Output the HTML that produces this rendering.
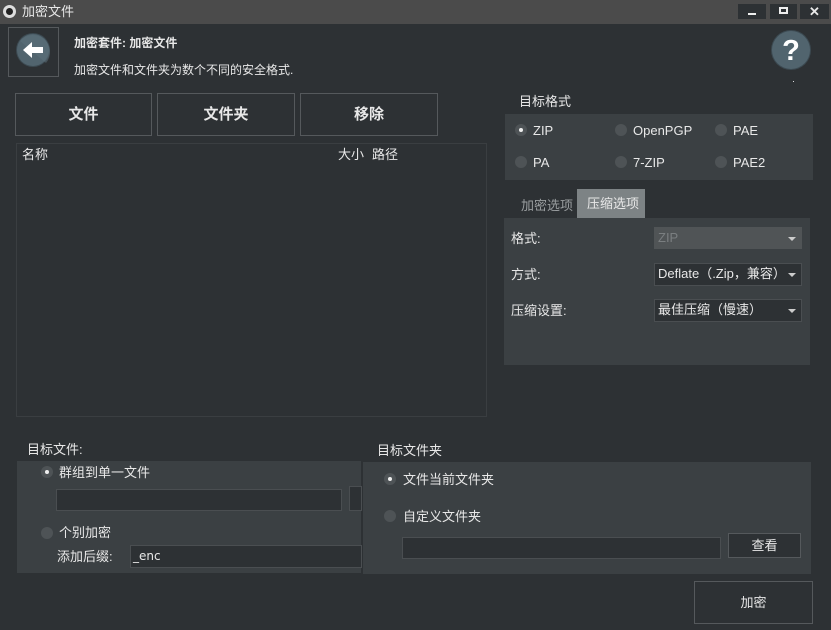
<!DOCTYPE html>
<html><head><meta charset="utf-8"><style>
*{margin:0;padding:0;box-sizing:border-box}
body{width:831px;height:630px;background:#2d3134;font-family:"Liberation Sans","Noto Sans CJK SC",sans-serif;font-size:13px;line-height:15px;color:#e8e8e8;position:relative;overflow:hidden}
.a{position:absolute}
.btn{position:absolute;border:1px solid #55595c;background:#2d3134;display:flex;align-items:center;justify-content:center}
.panel{position:absolute;background:#3b4043}
.r{position:absolute;width:12px;height:12px;border-radius:50%;background:#4e5356}
.r.on::after{content:"";position:absolute;left:4px;top:4px;width:4px;height:4px;border-radius:50%;background:#eee}
.inp{position:absolute;background:#2d3134;border:1px solid #4a4e51}
.combo{position:absolute;background:#2d3134;border:1px solid #4a4e51;padding-left:3px;line-height:19px}
.combo::after{content:"";position:absolute;right:5px;top:9px;border:4px solid transparent;border-top:4px solid #ccc}
</style></head><body>
<div class="a" style="left:0;top:0;width:831px;height:24px;background:#4b4b4b"></div>
<div class="a" style="left:3px;top:5px;width:13px;height:13px;border-radius:50%;background:#ddd"></div>
<div class="a" style="left:6px;top:8px;width:7px;height:7px;border-radius:50%;background:#222"></div>
<div class="a" style="left:22px;top:4px;font-size:13px">加密文件</div>
<div class="a" style="left:738px;top:4px;width:28px;height:15px;background:#2d3134"><div class="a" style="left:10px;top:9px;width:8px;height:2px;background:#eee"></div></div>
<div class="a" style="left:770px;top:4px;width:27px;height:15px;background:#2d3134"><div class="a" style="left:9px;top:3px;width:9px;height:7px;border:2px solid #eee"></div></div>
<div class="a" style="left:800px;top:4px;width:29px;height:15px;background:#2d3134;font-weight:bold;font-size:13px;text-align:center;line-height:15px">✕</div>

<div class="a" style="left:8px;top:27px;width:51px;height:50px;border:1px solid #55595c"></div>
<svg class="a" style="left:16px;top:33px" width="36" height="36"><circle cx="17" cy="17" r="17" fill="#3c4a52"/><circle cx="17" cy="17" r="16" fill="#51646e"/><path d="M4 8 L30 30 A17 17 0 0 0 4 8Z" fill="#5d717b" opacity=".5"/><path d="M7 17 L16 9 V14 H27 V20 H16 V25Z" fill="#fff"/></svg>
<div class="a" style="left:74px;top:36px;font-weight:bold;font-size:12px">加密套件: 加密文件</div>
<div class="a" style="left:74px;top:63px;font-size:12px">加密文件和文件夹为数个不同的安全格式.</div>
<svg class="a" style="left:771px;top:30px" width="41" height="41"><circle cx="20" cy="20" r="20" fill="#3c4a52"/><circle cx="20" cy="20" r="19" fill="#51646e"/><text x="20" y="30" text-anchor="middle" font-family="Liberation Sans" font-weight="bold" font-size="29" fill="#fff">?</text></svg>
<div class="a" style="left:793px;top:81px;width:1px;height:1px;background:#ddd"></div>

<div class="btn" style="left:15px;top:93px;width:137px;height:43px;font-weight:bold;font-size:15px">文件</div>
<div class="btn" style="left:157px;top:93px;width:138px;height:43px;font-weight:bold;font-size:15px">文件夹</div>
<div class="btn" style="left:300px;top:93px;width:138px;height:43px;font-weight:bold;font-size:15px">移除</div>
<div class="a" style="left:16px;top:143px;width:471px;height:274px;border:1px solid #3a3e41"></div>
<div class="a" style="left:22px;top:147px">名称</div>
<div class="a" style="left:338px;top:147px">大小</div>
<div class="a" style="left:372px;top:147px">路径</div>

<div class="a" style="left:519px;top:94px">目标格式</div>
<div class="panel" style="left:505px;top:114px;width:308px;height:66px"></div>
<div class="r on" style="left:515px;top:124px"></div><div class="a" style="left:533px;top:123px">ZIP</div>
<div class="r" style="left:615px;top:124px"></div><div class="a" style="left:633px;top:123px">OpenPGP</div>
<div class="r" style="left:715px;top:124px"></div><div class="a" style="left:733px;top:123px">PAE</div>
<div class="r" style="left:515px;top:156px"></div><div class="a" style="left:533px;top:155px">PA</div>
<div class="r" style="left:615px;top:156px"></div><div class="a" style="left:633px;top:155px">7-ZIP</div>
<div class="r" style="left:715px;top:156px"></div><div class="a" style="left:733px;top:155px">PAE2</div>

<div class="a" style="left:521px;top:198px;color:#9a9ea0">加密选项</div>
<div class="a" style="left:577px;top:189px;width:68px;height:30px;background:#7d8385"></div>
<div class="a" style="left:587px;top:196px">压缩选项</div>
<div class="panel" style="left:504px;top:218px;width:306px;height:147px"></div>
<div class="a" style="left:511px;top:231px">格式:</div>
<div class="combo" style="left:654px;top:227px;width:148px;height:22px;background:#505456;border-color:#505456;color:#7a7e80">ZIP</div>
<div class="a" style="left:511px;top:267px">方式:</div>
<div class="combo" style="left:654px;top:263px;width:148px;height:23px">Deflate（.Zip，兼容）</div>
<div class="a" style="left:511px;top:303px">压缩设置:</div>
<div class="combo" style="left:654px;top:299px;width:148px;height:23px">最佳压缩（慢速）</div>

<div class="a" style="left:27px;top:442px">目标文件:</div>
<div class="panel" style="left:17px;top:461px;width:344px;height:112px"></div>
<div class="r on" style="left:41px;top:466px"></div><div class="a" style="left:59px;top:465px">群组到单一文件</div>
<div class="inp" style="left:56px;top:489px;width:286px;height:22px"></div>
<div class="inp" style="left:349px;top:486px;width:13px;height:25px"></div>
<div class="r" style="left:41px;top:527px"></div><div class="a" style="left:59px;top:525px">个别加密</div>
<div class="a" style="left:57px;top:549px">添加后缀:</div>
<div class="inp" style="left:130px;top:545px;width:232px;height:23px;padding:3px 2px;font-size:12px;font-family:'DejaVu Sans'">_enc</div>

<div class="a" style="left:377px;top:443px">目标文件夹</div>
<div class="panel" style="left:363px;top:462px;width:448px;height:112px"></div>
<div class="r on" style="left:384px;top:473px"></div><div class="a" style="left:403px;top:472px">文件当前文件夹</div>
<div class="r" style="left:384px;top:510px"></div><div class="a" style="left:403px;top:509px">自定义文件夹</div>
<div class="inp" style="left:402px;top:537px;width:319px;height:22px"></div>
<div class="btn" style="left:728px;top:533px;width:73px;height:25px">查看</div>

<div class="btn" style="left:694px;top:581px;width:119px;height:43px">加密</div>
</body></html>
